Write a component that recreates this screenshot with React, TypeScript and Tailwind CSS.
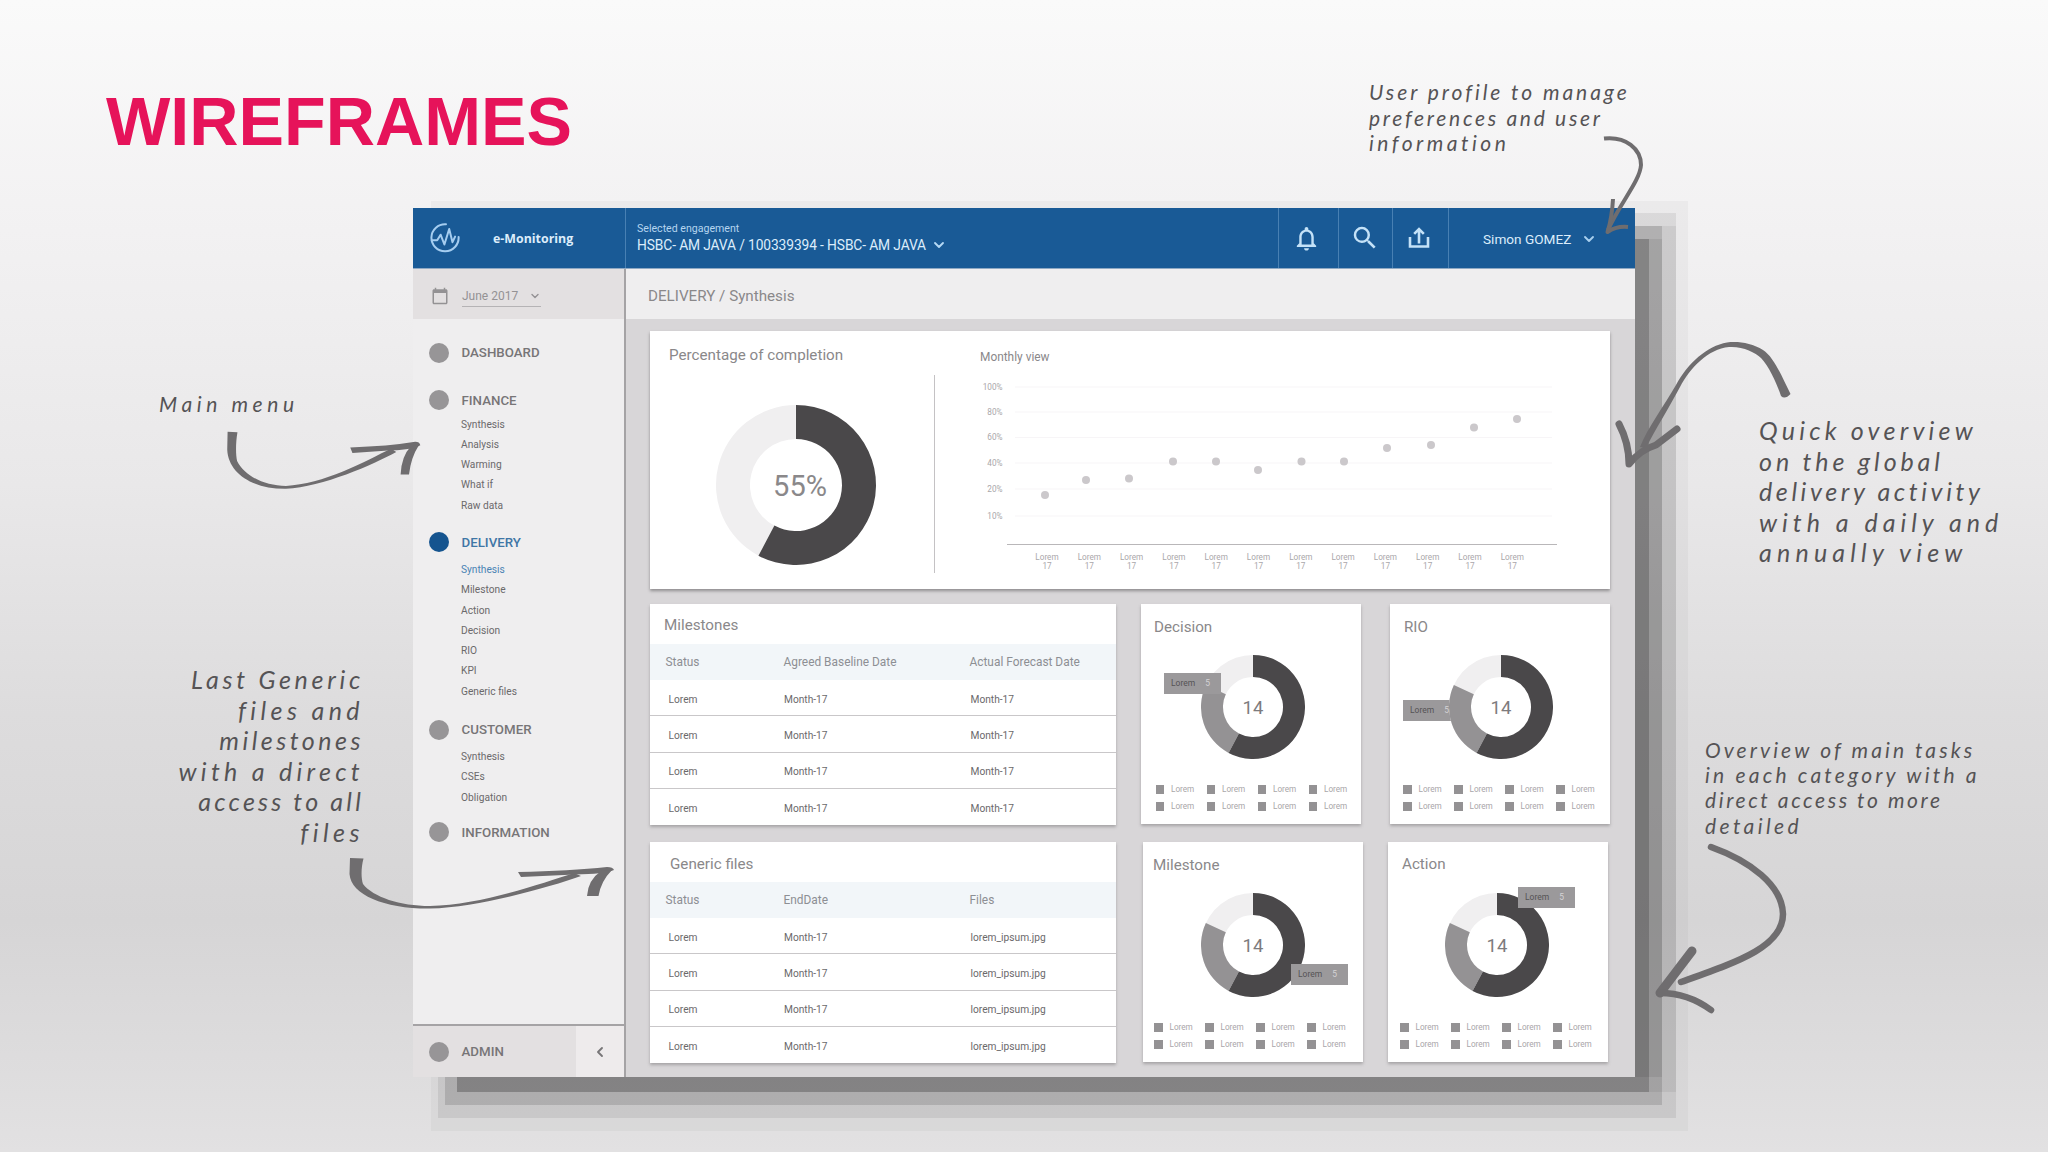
import { ChevronDown, ChevronLeft } from "lucide-react";
import { MdCalendarToday, MdNotificationsNone, MdSearch } from "react-icons/md";
import clsx from "clsx";

const menu = [
  { label: "DASHBOARD", gap: "mb-[26.5px]", list: "", items: [] },
  { label: "FINANCE", gap: "mb-[16px]", list: "pt-[4px]", items: ["Synthesis", "Analysis", "Warming", "What if", "Raw data"] },
  {
    label: "DELIVERY",
    active: true,
    gap: "mb-[17.4px]",
    list: "pt-[7px]",
    items: ["Synthesis", "Milestone", "Action", "Decision", "RIO", "KPI", "Generic files"],
  },
  { label: "CUSTOMER", gap: "mb-[14px]", list: "pt-[6.5px]", items: ["Synthesis", "CSEs", "Obligation"] },
  { label: "INFORMATION", gap: "", list: "", items: [] },
];

const yLabels = [
  { text: "100%", y: 56 },
  { text: "80%", y: 81 },
  { text: "60%", y: 106.5 },
  { text: "40%", y: 132 },
  { text: "20%", y: 158 },
  { text: "10%", y: 185 },
];

// [x, y] inside the chart drawing
const points = [
  [71, 164],
  [112, 149],
  [155, 147.5],
  [199, 130.5],
  [242, 130.5],
  [284, 139],
  [327.5, 130.5],
  [370, 130.5],
  [413, 117],
  [457, 114],
  [500, 96.5],
  [543, 88],
];

function polar(r: number, deg: number) {
  const a = ((deg - 90) * Math.PI) / 180;
  return `${(r * Math.cos(a)).toFixed(2)} ${(r * Math.sin(a)).toFixed(2)}`;
}

function ring(r: number, inner: number, from: number, to: number) {
  const large = to - from > 180 ? 1 : 0;
  return `M${polar(r, from)} A${r} ${r} 0 ${large} 1 ${polar(r, to)} L${polar(inner, to)} A${inner} ${inner} 0 ${large} 0 ${polar(inner, from)} Z`;
}

interface DonutProps {
  r: number;
  inner: number;
  split?: boolean;
  className?: string;
}

function Donut({ r, inner, split, className }: DonutProps) {
  return (
    <svg className={className} width={r * 2} height={r * 2} viewBox={`${-r} ${-r} ${r * 2} ${r * 2}`}>
      <path d={ring(r, inner, 208, 359.9)} fill="#f0eff0" />
      {split && <path d={ring(r, inner, 208, 295)} fill="#949294" />}
      <path d={ring(r, inner, 0, 208)} fill="#4a484a" />
    </svg>
  );
}

function Logo() {
  return (
    <svg width="30" height="30" viewBox="0 0 30 30" fill="none" stroke="#a5cdf0" strokeWidth="2" strokeLinecap="round" strokeLinejoin="round">
      <path d="M16 1.2A13.6 13.6 0 1 0 28.6 14" />
      <path d="M1.8 17.3h5.4l3.4-5.6 3.8 9.8L19.2 6l3.3 13.2 2.6-5.6" />
    </svg>
  );
}

function ShareIcon() {
  return (
    <svg width="24" height="24" viewBox="0 0 24 24" fill="none" stroke="#c4e2f8" strokeWidth="2.6">
      <path d="M3 11v9.500h18V11" />
      <path d="M12 17.500V3M7.2 7.8 12 3l4.800 4.800" />
    </svg>
  );
}

function TopBar() {
  return (
    <header className="flex h-[60px] bg-[#195a96] text-[#dcedfb] shrink-0">
      <div className="w-[213px] flex items-center pl-[17px] border-r border-[#4880b3]">
        <Logo />
        <span className="ml-[33px] mt-[3px] font-['Open_Sans'] font-bold text-[12.4px]">e-Monitoring</span>
      </div>
      <div className="flex-1 pl-[11px] pt-[13px]">
        <div className="text-[10.6px] leading-4 text-[#b5d5ef]">Selected engagement</div>
        <div className="flex items-center text-[13.8px] leading-4 tracking-[-0.12px] whitespace-nowrap">
          HSBC- AM JAVA / 100339394 - HSBC- AM JAVA
          <ChevronDown size={16} strokeWidth={2.8} className="ml-[5px] text-[#b5d9f5]" />
        </div>
      </div>
      <div className="w-[60px] flex items-center justify-center pr-1 border-l border-[#4880b3]">
        <MdNotificationsNone size={29} className="text-[#c4e2f8]" />
      </div>
      <div className="w-[54px] flex items-center justify-center pr-[2px] border-l border-[#4880b3]">
        <MdSearch size={30} className="text-[#c4e2f8]" />
      </div>
      <div className="w-[56px] flex items-center justify-center pr-[3px] border-l border-[#4880b3]">
        <ShareIcon />
      </div>
      <div className="w-[187px] flex items-center pl-[34px] pt-[2px] border-l border-[#4880b3] text-[13.6px]">
        Simon GOMEZ
        <ChevronDown size={16} strokeWidth={2.8} className="ml-[10px] text-[#a9d0ef]" />
      </div>
    </header>
  );
}

function Sidebar() {
  return (
    <aside className="w-[213px] flex flex-col bg-[#efeeef] border-r-2 border-[#a5a3a5] shrink-0">
      <div className="h-[50px] flex items-center pl-[18px] pt-[3px] bg-[#e3e0e1] text-[#949294]">
        <MdCalendarToday size={18} />
        <div className="ml-[13px] mt-[2px] w-[79px] h-5 flex items-center justify-between border-b border-[#b5b3b5] text-[12px]">
          June 2017
          <ChevronDown size={12} strokeWidth={2.8} />
        </div>
      </div>
      <nav className="flex-1 pt-[23px] pl-[16px]">
        {menu.map((group) => (
          <div key={group.label} className={group.gap}>
            <div className="flex items-center h-[21px]">
              <span className={clsx("w-[20px] h-[20px] rounded-full", group.active ? "bg-[#15548f]" : "bg-[#979597]")} />
              <span className={clsx("ml-[12.5px] pt-px text-[13.3px] font-medium", group.active ? "text-[#3f76a6]" : "text-[#777577]")}>
                {group.label}
              </span>
            </div>
            {group.items.length > 0 && (
              <ul className={clsx("pl-[32px]", group.list)}>
                {group.items.map((item, i) => (
                  <li
                    key={item}
                    className={clsx("h-[20.3px] leading-[20.3px] text-[10.2px]", group.active && i === 0 ? "text-[#4a83b4]" : "text-[#6b696b]")}
                  >
                    {item}
                  </li>
                ))}
              </ul>
            )}
          </div>
        ))}
      </nav>
      <div className="h-[53px] flex items-center pl-[16px] bg-[#e3e0e1] border-t-2 border-[#a5a3a5]">
        <span className="w-[20px] h-[20px] rounded-full bg-[#979597]" />
        <span className="ml-[12.5px] pt-px flex-1 text-[13.3px] font-medium text-[#777577]">ADMIN</span>
        <div className="w-[48px] h-full flex items-center justify-center bg-[#eeebec]">
          <ChevronLeft size={16} strokeWidth={2.8} className="text-[#777577]" />
        </div>
      </div>
    </aside>
  );
}

function Completion() {
  return (
    <section className="flex w-[960px] h-[258px] bg-white shadow-[0_2px_3px_#8f8d8f] text-[#8a888a]">
      <div className="w-[284px] pt-[14px] pl-[19px]">
        <h2 className="text-[15.2px] leading-5">Percentage of completion</h2>
        <div className="relative mt-[40px] ml-[47px] w-[160px]">
          <Donut r={80} inner={46} />
          <span className="absolute inset-0 flex items-center justify-center pt-1 pl-[8px] text-[29px]">55%</span>
        </div>
      </div>
      <div className="w-px h-[198px] mt-[44px] bg-[#c4c2c4]" />
      <div className="pt-[16px] pl-[45px]">
        <h3 className="text-[11.9px] leading-5">Monthly view</h3>
        <svg className="-mt-[36px] -ml-[6px]" width="600" height="250" viewBox="0 0 600 250" fontFamily="Roboto, sans-serif">
          {yLabels.map((l) => (
            <g key={l.text}>
              <text x="28.500" y={l.y + 2.5} textAnchor="end" fontSize="8.2" fill="#aaa7aa">{l.text}</text>
              <path d={`M41 ${l.y}H578`} stroke="#f7f5f7" />
            </g>
          ))}
          <path d="M33 213.500H583" stroke="#b9b7b9" strokeWidth="1.2" />
          {points.map(([x, y], i) => (
            <g key={x}>
              <circle cx={x} cy={y} r="4" fill="#cbc8cb" />
              <g fontSize="8.2" fill="#aaa7aa" textAnchor="middle">
                <text x={73 + i * 42.3} y="229">Lorem</text>
                <text x={73 + i * 42.3} y="238">17</text>
              </g>
            </g>
          ))}
        </svg>
      </div>
    </section>
  );
}

interface TableCardProps {
  title: string;
  heads: string[];
  last: string;
  className?: string;
  titleClass: string;
}

function TableCard({ title, heads, last, className, titleClass }: TableCardProps) {
  return (
    <section className={clsx("h-[221px] bg-white shadow-[0_2px_3px_#a5a3a5]", className)}>
      <h2 className={clsx("text-[15.2px] leading-[40px] h-[40px] text-[#8a888a]", titleClass)}>{title}</h2>
      <div className="grid grid-cols-[118px_186px_1fr] h-[36px] items-center pl-[15.5px] pt-[2px] bg-[#f2f6f9] text-[11.9px] text-[#8d8f94]">
        {heads.map((h) => (
          <span key={h} className="whitespace-nowrap">{h}</span>
        ))}
      </div>
      {[0, 1, 2, 3].map((i) => (
        <div
          key={i}
          className="grid grid-cols-[115.5px_186.5px_1fr] h-[36.4px] items-center pl-[18.5px] pt-[3px] border-b border-[#c9c7c9] last:border-b-0 text-[10.2px] text-[#6b696b]"
        >
          <span>Lorem</span>
          <span>Month-17</span>
          <span>{last}</span>
        </div>
      ))}
    </section>
  );
}

interface DonutCardProps {
  title: string;
  className?: string;
  titleClass: string;
  donutClass: string;
  tipClass: string;
  legendClass: string;
}

function DonutCard({ title, className, titleClass, donutClass, tipClass, legendClass }: DonutCardProps) {
  return (
    <section className={clsx("relative w-[220px] h-[220px] bg-white shadow-[0_2px_3px_#a5a3a5]", className)}>
      <h2 className={clsx("h-[51px] text-[15.2px] leading-5 text-[#8a888a]", titleClass)}>{title}</h2>
      <div className={clsx("relative z-10 w-[104px] h-[104px]", donutClass)}>
        <Donut r={52} inner={30} split />
        <span className="absolute inset-0 flex items-center justify-center pt-[4px] text-[18.5px] text-[#7d7b7d]">14</span>
      </div>
      <div className={clsx("absolute w-[57px] h-[21px] flex items-center pl-[7px] bg-[#9b999b] text-[8.5px] text-[#555355]", tipClass)}>
        Lorem
        <span className="ml-[10px] text-[#d5d3d5]">5</span>
      </div>
      <div className={clsx("grid grid-cols-[repeat(4,51px)] gap-y-[1px] mt-[22.500px]", legendClass)}>
        {Array.from({ length: 8 }, (_, i) => (
          <div key={i} className="flex items-center h-4 text-[8.2px] text-[#a9a6a9]">
            <span className="w-[8.500px] h-[8.500px] mr-[7px] bg-[#949294]" />
            Lorem
          </div>
        ))}
      </div>
    </section>
  );
}

interface NoteProps {
  // text and its letter spacing
  lines: [string, string][];
  className: string;
}

function Note({ lines, className }: NoteProps) {
  return (
    <div className={clsx("absolute font-['Segoe_Script','Lato',cursive] italic text-[#555355] whitespace-nowrap", className)}>
      {lines.map(([text, tracking]) => (
        <p key={text} className={tracking}>{text}</p>
      ))}
    </div>
  );
}

function SwooshArrow({ transform }: { transform?: string }) {
  return (
    <g transform={transform} fill="#6f6d6f">
      <path d="M350 858 L363.500 858.500 C361 868 361 878 363 884 C373 897 400 906 430 906 C480 905 540 884 574 873 L581 876 C550 887 480 907 430 908.6 C385 909 351 895 349.500 874 Z" />
      <path d="M518 872 Q570 871 607 867 Q613 867 614 870 Q604 874 575 874.500 L521 877 Z" />
      <path d="M601 871 L612 870 Q601 881 598.500 896 L587 896 Q588 880 601 871 Z" />
    </g>
  );
}

function Arrows() {
  return (
    <svg className="absolute inset-0 pointer-events-none" width="2048" height="1152" fill="none" stroke="#6f6d6f" strokeLinecap="round" strokeLinejoin="round">
      <g strokeWidth="4" strokeLinecap="butt">
        <path d="M1604 138.500C1626 136 1641 149 1641 165C1640 181 1620 203 1608 230" />
        <path d="M1613 199Q1612 218 1607.500 232Q1616 226 1628 227" />
      </g>
      <g stroke="none">
        <SwooshArrow transform="matrix(.73 0 0 1.13 -27.9 -537.9)" />
        <SwooshArrow />
        <path
          fill="#6f6d6f"
          d="M1781 396Q1785 400 1790.500 394C1782 377 1774 357 1763 350C1752 343 1738 341 1727 342.500C1707 346 1688 363 1676 385C1664 406 1648 427 1640 447L1646 448C1655 430 1670 406 1680 387C1690 368 1708 349 1729 347C1742 346 1755 352 1761 358C1769 366 1777 384 1781 396Z"
        />
      </g>
      <path d="M1619 424Q1629 443 1629 464Q1640 450 1656 445L1677 429" strokeWidth="7" />
      <path d="M1711 847C1750 861 1782 885 1783 914C1783 947 1737 962 1681 982" strokeWidth="6.500" />
      <path d="M1692 951L1660 993" strokeWidth="9" />
      <path d="M1660 993Q1688 993 1711 1010" strokeWidth="6.500" />
    </svg>
  );
}

export default function App() {
  return (
    <div className="relative w-[2048px] h-[1152px] overflow-hidden font-['Roboto',sans-serif] bg-[linear-gradient(#fafafa_0%,#f2f1f2_20%,#e9e8e9_42%,#dddcdd_62%,#d6d5d6_80%,#e2e1e2_100%)]">
      <h1 className="absolute left-[106px] top-[82px] font-['Liberation_Sans',Arial,sans-serif] font-bold text-[68.2px] leading-[78px] text-[#e6135a]">
        WIREFRAMES
      </h1>

      {/* stepped drop shadow, widest first; the last three only deepen the right side */}
      <div className="absolute left-[431px] top-[201px] w-[1257px] h-[930px] bg-black/3" />
      <div className="absolute left-[438px] top-[213px] w-[1238px] h-[905px] bg-black/7" />
      <div className="absolute left-[445px] top-[226px] w-[1217px] h-[879px] bg-black/13" />
      <div className="absolute left-[457px] top-[239px] w-[1192px] h-[853px] bg-black/19" />
      <div className="absolute left-[457px] top-[226px] w-[1219px] h-[866px] bg-black/6" />
      <div className="absolute left-[457px] top-[239px] w-[1205px] h-[838px] bg-black/7" />

      <div className="absolute left-[413px] top-[208px] w-[1222px] h-[869px] flex flex-col bg-[#d8d6d8]">
        <TopBar />
        <div className="flex flex-1 border-t border-[#8fa9c4]">
          <Sidebar />
          <main className="flex-1">
            <div className="h-[50px] flex items-center pl-[22px] pt-[4px] bg-[#efeeef] text-[15.2px] text-[#8a888a]">
              DELIVERY / Synthesis
            </div>
            <div className="pt-[12px] pl-[24px]">
              <Completion />
              <div className="flex mt-[15px]">
                <TableCard
                  title="Milestones"
                  heads={["Status", "Agreed Baseline Date", "Actual Forecast Date"]}
                  last="Month-17"
                  className="w-[466px]"
                  titleClass="pl-[14px] pt-px"
                />
                <DonutCard
                  title="Decision"
                  className="ml-[25px]"
                  titleClass="pt-[13px] pl-[13px]"
                  donutClass="ml-[60px]"
                  tipClass="left-[23px] top-[69px] z-10"
                  legendClass="ml-[14.5px]"
                />
                <DonutCard
                  title="RIO"
                  className="ml-[29px]"
                  titleClass="pt-[13px] pl-[14px]"
                  donutClass="ml-[59px]"
                  tipClass="left-[13px] top-[96px] z-0"
                  legendClass="ml-[13px]"
                />
              </div>
              <div className="flex mt-[17px]">
                <TableCard
                  title="Generic files"
                  heads={["Status", "EndDate", "Files"]}
                  last="lorem_ipsum.jpg"
                  className="w-[466px]"
                  titleClass="pl-[20px] pt-[2px]"
                />
                <DonutCard
                  title="Milestone"
                  className="ml-[27px]"
                  titleClass="pt-[13px] pl-[10px]"
                  donutClass="ml-[58px]"
                  tipClass="left-[148px] top-[122px] z-10"
                  legendClass="ml-[11px]"
                />
                <DonutCard
                  title="Action"
                  className="ml-[25px]"
                  titleClass="pt-[12px] pl-[14px]"
                  donutClass="ml-[57px]"
                  tipClass="left-[130px] top-[45px] z-10"
                  legendClass="ml-[12px]"
                />
              </div>
            </div>
          </main>
        </div>
      </div>

      <Note
        className="left-[1369px] top-[79px] text-[21px] leading-[25.7px]"
        lines={[
          ["User profile to manage", "tracking-[2.95px]"],
          ["preferences and user", "tracking-[2.7px]"],
          ["information", "tracking-[3.5px]"],
        ]}
      />
      <Note className="left-[159px] top-[391px] text-[21px] leading-[25.7px]" lines={[["Main menu", "tracking-[4.6px]"]]} />
      <Note
        className="right-[1684px] top-[664px] text-right text-[25px] leading-[30.6px]"
        lines={[
          ["Last Generic", "tracking-[3.7px]"],
          ["files and", "tracking-[4.4px]"],
          ["milestones", "tracking-[3.5px]"],
          ["with a direct", "tracking-[4.3px]"],
          ["access to all", "tracking-[3.2px]"],
          ["files", "tracking-[4.5px]"],
        ]}
      />
      <Note
        className="left-[1759px] top-[415px] text-[25px] leading-[30.6px]"
        lines={[
          ["Quick overview", "tracking-[4.2px]"],
          ["on the global", "tracking-[3.9px]"],
          ["delivery activity", "tracking-[3.6px]"],
          ["with a daily and", "tracking-[5px]"],
          ["annually view", "tracking-[5.2px]"],
        ]}
      />
      <Note
        className="left-[1705px] top-[737px] text-[21px] leading-[25.2px]"
        lines={[
          ["Overview of main tasks", "tracking-[3.1px]"],
          ["in each category with a", "tracking-[3.2px]"],
          ["direct access to more", "tracking-[2.6px]"],
          ["detailed", "tracking-[3.4px]"],
        ]}
      />
      <Arrows />
    </div>
  );
}
